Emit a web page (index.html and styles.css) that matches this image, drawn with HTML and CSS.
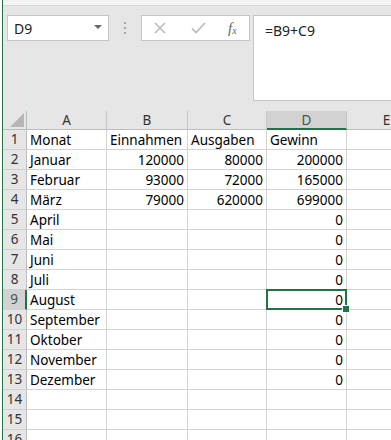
FILE: index.html
```html
<!DOCTYPE html>
<html lang="de">
<head>
    <meta charset="UTF-8">
    <meta name="viewport" content="width=device-width, initial-scale=1.0">
    <title>Excel - Gewinn</title>
    <link rel="stylesheet" href="styles.css">
</head>
<body>
    <div class="app">
        <div class="ribbon-edge"></div>

        <div class="formula-row">
            <div class="namebox">
                <span>D9</span>
                <span class="caret"></span>
            </div>
            <div class="grip">
                <i></i><i></i><i></i>
            </div>
            <div class="fbuttons">
                <svg width="12" height="12" viewBox="0 0 12 12"><path d="M1 1L11 11M11 1L1 11" stroke="#b9b9b9" stroke-width="1.5" fill="none"/></svg>
                <svg width="15" height="12" viewBox="0 0 15 12"><path d="M1 6.5L5 10.5L14 1" stroke="#b9b9b9" stroke-width="1.6" fill="none"/></svg>
                <span class="fx">f<sub>x</sub></span>
            </div>
            <div class="formula">=B9+C9</div>
        </div>

        <div class="sheet" id="sheet"></div>
    </div>

    <script>
const cols = ['A', 'B', 'C', 'D', 'E'];
const data = [
    ['Monat', 'Einnahmen', 'Ausgaben', 'Gewinn'],
    ['Januar', 120000, 80000, 200000],
    ['Februar', 93000, 72000, 165000],
    ['März', 79000, 620000, 699000],
    ['April', '', '', 0],
    ['Mai', '', '', 0],
    ['Juni', '', '', 0],
    ['Juli', '', '', 0],
    ['August', '', '', 0],
    ['September', '', '', 0],
    ['Oktober', '', '', 0],
    ['November', '', '', 0],
    ['Dezember', '', '', 0],
    ['', '', '', ''],
    ['', '', '', ''],
    ['', '', '', '']
];

const sheet = document.getElementById('sheet');
let html = '<div class="corner"><span></span></div>';
cols.forEach(c => {
    html += `<div class="colhead${c === 'D' ? ' active' : ''}">${c}</div>`;
});

data.forEach((row, r) => {
    const num = r + 1;
    html += `<div class="rowhead${num === 9 ? ' active' : ''}">${num}</div>`;
    row.forEach((val, c) => {
        const isNum = typeof val === 'number';
        const sel = num === 9 && c === 3 ? ' sel' : '';
        html += `<div class="cell${isNum ? ' num' : ''}${sel}">${val}</div>`;
    });
    html += '<div class="cell"></div>';
});

sheet.innerHTML = html;
    </script>
</body>
</html>
```

FILE: styles.css
```css
* {
    box-sizing: border-box;
}

body {
    margin: 0;
    padding: 0;
    height: 440px;
    overflow: hidden;
    background: #fff;
    font-family: 'Noto Sans', sans-serif;
}

.app {
    margin-left: 2px;
    border-left: 1px solid #217346;
    background: #e6e6e6;
    height: 440px;
    overflow: hidden;
}

.ribbon-edge {
    height: 6px;
    background: #f3f3f3;
    border-bottom: 1px solid #d9d9d9;
}

.formula-row {
    display: flex;
    align-items: flex-start;
    padding: 9px 0 0 4px;
    height: 105px;
}

.namebox {
    width: 102px;
    height: 26px;
    background: #fff;
    border: 1px solid #c6c6c6;
    display: flex;
    align-items: center;
    justify-content: space-between;
    padding: 0 6px 0 6px;
    font-size: 14px;
    color: #222;
}

.caret {
    width: 0;
    height: 0;
    border-left: 4px solid transparent;
    border-right: 4px solid transparent;
    border-top: 4px solid #666;
    margin-bottom: 2px;
}

.grip {
    width: 32px;
    height: 26px;
    display: flex;
    flex-direction: column;
    align-items: center;
    justify-content: center;
    gap: 3px;
}

.grip i {
    width: 2px;
    height: 2px;
    background: #a6a6a6;
}

.fbuttons {
    width: 109px;
    height: 26px;
    background: #fff;
    border: 1px solid #c6c6c6;
    display: flex;
    align-items: center;
    padding: 0 0 0 12px;
}

.fbuttons svg:first-child {
    margin-right: 25px;
}

.fbuttons svg:nth-child(2) {
    margin-right: 22px;
}

.fx {
    font-family: 'Liberation Serif', serif;
    font-style: italic;
    font-size: 15px;
    color: #666;
    line-height: 1;
}

.fx sub {
    font-size: 10px;
    vertical-align: -1px;
}

.formula {
    flex: 1;
    margin-left: 3px;
    height: 86px;
    background: #fff;
    border: 1px solid #c6c6c6;
    border-right: none;
    padding: 5px 0 0 11px;
    font-size: 14px;
    color: #222;
}

.sheet {
    display: grid;
    grid-template-columns: 24px 80px 81px 79px 80px 80px;
    grid-template-rows: 19px;
    grid-auto-rows: 20px;
    font-size: 13.5px;
    color: #000;
}

.corner {
    background: #e6e6e6;
    border-right: 1px solid #bdbdbd;
    border-bottom: 1px solid #bdbdbd;
    display: flex;
    align-items: flex-end;
    justify-content: flex-end;
    padding: 0 2px 2px 0;
}

.corner span {
    width: 0;
    height: 0;
    border-left: 14px solid transparent;
    border-bottom: 14px solid #b6b6b6;
}

.colhead {
    background: #e6e6e6;
    border-right: 1px solid #c6c6c6;
    border-bottom: 1px solid #bdbdbd;
    text-align: center;
    line-height: 18px;
    color: #333;
}

.colhead.active {
    background: #d2d2d2;
    border-bottom: 2px solid #217346;
    color: #3c5a47;
}

.rowhead {
    background: #e6e6e6;
    border-right: 1px solid #bdbdbd;
    border-bottom: 1px solid #d0d0d0;
    text-align: center;
    line-height: 19px;
    color: #333;
}

.rowhead.active {
    background: #d2d2d2;
    border-right: 2px solid #217346;
    color: #3c5a47;
}

.cell {
    background: #fff;
    border-right: 1px solid #d4d4d4;
    border-bottom: 1px solid #d4d4d4;
    padding: 0 3px;
    line-height: 20px;
    white-space: nowrap;
}

.cell.num {
    text-align: right;
}

.cell.sel {
    position: relative;
}

.cell.sel::after {
    content: '';
    position: absolute;
    left: -1px;
    top: -1px;
    right: -1px;
    bottom: -1px;
    border: 2px solid #217346;
}

.cell.sel::before {
    content: '';
    position: absolute;
    right: -4px;
    bottom: -4px;
    width: 6px;
    height: 6px;
    background: #217346;
    border: 1px solid #fff;
    z-index: 1;
}
```
